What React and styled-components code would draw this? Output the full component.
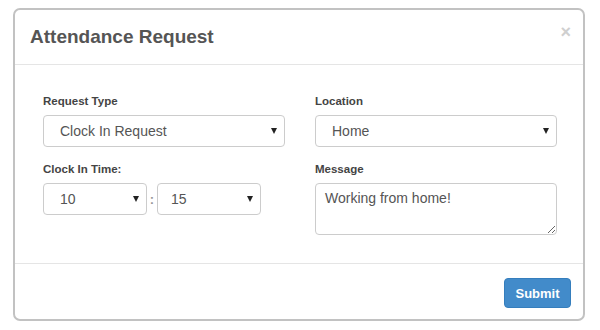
import styled, { createGlobalStyle } from "styled-components";

const GlobalStyle = createGlobalStyle`
  html, body {
    margin: 0;
    padding: 0;
    background: #fff;
  }
  body {
    font-family: "Liberation Sans", Arial, sans-serif;
  }
  * {
    box-sizing: border-box;
  }
`;

const Page = styled.div`
  padding: 8px 0 0 13px;
`;

const Modal = styled.div`
  width: 572px;
  height: 313px;
  border: 2px solid #c2c2c2;
  border-radius: 7px;
  background: #fff;
  display: flex;
  flex-direction: column;
`;

const Header = styled.div`
  height: 55px;
  padding: 0 15px;
  border-bottom: 1px solid #e5e5e5;
  display: flex;
  align-items: center;
  justify-content: space-between;
`;

const Title = styled.h4`
  margin: 0;
  font-size: 19px;
  font-weight: bold;
  color: #555;
`;

const Close = styled.button`
  border: none;
  background: none;
  padding: 0;
  margin: -10px -3px 0 0;
  font-family: "Liberation Sans", Arial, sans-serif;
  font-size: 18px;
  font-weight: bold;
  line-height: 1;
  color: #cfcfcf;
  cursor: pointer;
`;

const Body = styled.div`
  flex: 1;
  padding: 28px 26px 0 28px;
  display: grid;
  grid-template-columns: 242px 242px;
  column-gap: 30px;
  align-content: start;
`;

const Column = styled.div`
  display: flex;
  flex-direction: column;
`;

const Group = styled.div`
  display: flex;
  flex-direction: column;
  margin-bottom: 14px;
`;

const Label = styled.label`
  font-size: 11.5px;
  font-weight: bold;
  line-height: 17px;
  color: #444;
  margin-bottom: 5px;
`;

const SelectWrap = styled.div`
  position: relative;
  width: ${(p) => p.$width || "100%"};
`;

const Select = styled.select`
  appearance: none;
  -webkit-appearance: none;
  width: 100%;
  height: 32px;
  padding: 0 24px 0 ${(p) => p.$indent || 16}px;
  border: 1px solid #ccc;
  border-radius: 4px;
  background: #fff;
  font-family: "Liberation Sans", Arial, sans-serif;
  font-size: 14px;
  color: #555;
  outline: none;
`;

const Arrow = styled.span`
  position: absolute;
  right: 8px;
  top: 50%;
  transform: translateY(-50%);
  width: 0;
  height: 0;
  border-left: 3.5px solid transparent;
  border-right: 3.5px solid transparent;
  border-top: 6px solid #222;
  pointer-events: none;
`;

const TimeRow = styled.div`
  display: flex;
  align-items: center;
`;

const Colon = styled.span`
  width: 10px;
  text-align: center;
  font-size: 13px;
  font-weight: bold;
  color: #999;
`;

const TextArea = styled.textarea`
  width: 100%;
  height: 52px;
  padding: 6px 9px;
  border: 1px solid #ccc;
  border-radius: 4px;
  font-family: "Liberation Sans", Arial, sans-serif;
  font-size: 14px;
  color: #555;
  resize: vertical;
  outline: none;
`;

const Footer = styled.div`
  height: 56px;
  border-top: 1px solid #e5e5e5;
  padding: 14px 12px 0 0;
  display: flex;
  justify-content: flex-end;
  align-items: flex-start;
`;

const Button = styled.button`
  width: 67px;
  height: 30px;
  border: 1px solid #357ebd;
  border-radius: 4px;
  background: #428bca;
  color: #fff;
  font-family: "Liberation Sans", Arial, sans-serif;
  font-size: 13px;
  font-weight: bold;
  cursor: pointer;
`;

function Dropdown({ width, indent, value, options }) {
  return (
    <SelectWrap $width={width}>
      <Select $indent={indent} defaultValue={value}>
        {options.map((o) => (
          <option key={o}>{o}</option>
        ))}
      </Select>
      <Arrow />
    </SelectWrap>
  );
}

export default function App() {
  return (
    <Page>
      <GlobalStyle />
      <Modal>
        <Header>
          <Title>Attendance Request</Title>
          <Close aria-label="Close">×</Close>
        </Header>
        <Body>
          <Column>
            <Group>
              <Label>Request Type</Label>
              <Dropdown value="Clock In Request" options={["Clock In Request", "Clock Out Request"]} />
            </Group>
            <Group>
              <Label>Clock In Time:</Label>
              <TimeRow>
                <Dropdown width="104px" value="10" options={["09", "10", "11"]} />
                <Colon>:</Colon>
                <Dropdown width="104px" indent={13} value="15" options={["00", "15", "30", "45"]} />
              </TimeRow>
            </Group>
          </Column>
          <Column>
            <Group>
              <Label>Location</Label>
              <Dropdown value="Home" options={["Home", "Office"]} />
            </Group>
            <Group>
              <Label>Message</Label>
              <TextArea defaultValue="Working from home!" />
            </Group>
          </Column>
        </Body>
        <Footer>
          <Button>Submit</Button>
        </Footer>
      </Modal>
    </Page>
  );
}
